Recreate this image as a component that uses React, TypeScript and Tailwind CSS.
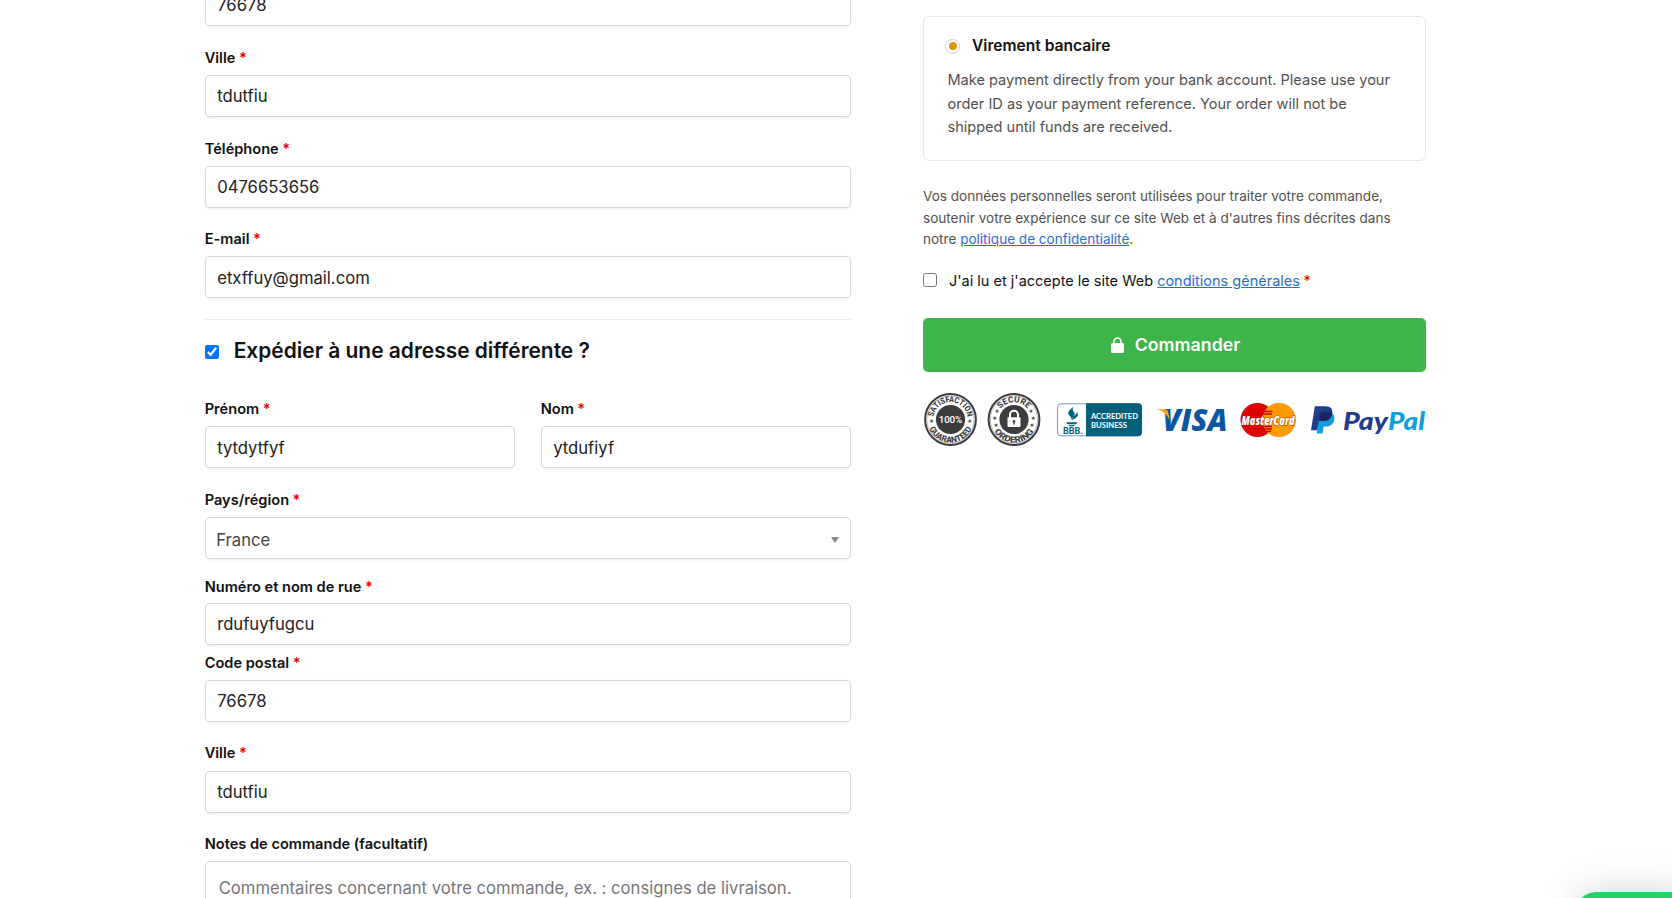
import React from "react";

const box =
  "block w-full h-[42px] shrink-0 rounded-[5px] border border-[#d3d7e0] bg-white px-[11.5px] text-[16.65px] text-[#222] shadow-[0_1px_3px_rgba(0,0,0,0.08)] outline-none placeholder:text-[#777]";

const caption = "mb-[6px] block text-[14.6px] leading-[22px] font-semibold text-[#111]";

function Star() {
  return <span className="ml-[3.5px] text-[#e2000f]">*</span>;
}

type FieldProps = { label: string; value: string; className?: string; captionClass?: string; inputClass?: string };

function Field({ label, value, className = "h-[91px]", captionClass = "", inputClass = "" }: FieldProps) {
  return (
    <label className={`flex w-full flex-col justify-end ${className}`}>
      {label && (
        <span className={`${caption} ${captionClass}`}>
          {label}
          <Star />
        </span>
      )}
      <input className={`${box} ${inputClass}`} defaultValue={value} />
    </label>
  );
}

function Seals() {
  return (
    <svg className="mt-[20px] block h-[56px] w-[504px]" viewBox="923 392 504 56">
      <defs>
        <path id="top1" d="M933.5 422a17.2 17.2 0 1 1 34 0" />
        <path id="bot1" d="M927.4 419.5a23.1 23.1 0 0 0 46.2 0" />
        <path id="top2" d="M996.8 419.5a17.2 17.2 0 0 1 34.4 0" />
        <path id="bot2" d="M990.9 419.5a23.1 23.1 0 0 0 46.2 0" />
      </defs>
      {[950.5, 1014].map((cx) => (
        <g key={cx}>
          <circle cx={cx} cy="419.5" r="25.4" fill="#fff" stroke="#3d3d40" strokeWidth="2" />
          <circle cx={cx} cy="419.5" r="23.6" fill="none" stroke="#77777a" strokeWidth="0.5" />
          <circle cx={cx} cy="419.5" r="14.6" fill="#3d3d40" />
        </g>
      ))}
      <g fill="#3d3d40" fontFamily="Roboto, sans-serif" fontWeight="800" fontSize="8.4" textAnchor="middle">
        <text><textPath href="#top1" startOffset="50%" textLength="49" lengthAdjust="spacingAndGlyphs">SATISFACTION</textPath></text>
        <text><textPath href="#bot1" startOffset="50%" textLength="54" lengthAdjust="spacingAndGlyphs">GUARANTEED</textPath></text>
        <text><textPath href="#top2" startOffset="50%" textLength="31" lengthAdjust="spacingAndGlyphs">SECURE</textPath></text>
        <text><textPath href="#bot2" startOffset="50%" textLength="47" lengthAdjust="spacingAndGlyphs">ORDERING</textPath></text>
        <text x="950.5" y="423" fontSize="9.8" fontWeight="500" fill="#fff" textLength="23.5">100%</text>
        <g fontSize="5.5" fontFamily="DejaVu Sans, sans-serif">
          <text x="931.4" y="423.4">★</text>
          <text x="969.6" y="423.4">★</text>
          <text x="997" y="413">★</text>
          <text x="994.8" y="420">★</text>
          <text x="996" y="427">★</text>
          <text x="1031" y="413">★</text>
          <text x="1033.2" y="420">★</text>
          <text x="1032" y="427">★</text>
        </g>
      </g>
      <path d="M1010 418v-3.2a4 4 0 0 1 8 0v3.2" fill="none" stroke="#fff" strokeWidth="2" />
      <rect x="1007.5" y="417.3" width="13" height="9.6" rx="1" fill="#fff" />
      <path d="M1014 420a1.4 1.4 0 0 1 .7 2.6v2h-1.4v-2a1.4 1.4 0 0 1 .7-2.6z" fill="#3d3d40" />

      <rect x="1057.5" y="403.8" width="84" height="32" rx="3.5" fill="#fff" stroke="#6b9fb0" />
      <path d="M1086 403.3h52a4 4 0 0 1 4 4v25a4 4 0 0 1-4 4h-52z" fill="#03607a" />
      <path d="M1073.5 406.5c-1.5 2-5.6 4.2-5.2 7 .3 2 3.2 2.6 2.6 5.3 2.1-1.3 4.3-3.1 3.9-5.2-.4-2.2-3.5-2.9-1.3-7.1zM1076.8 411.8c.5 2.8-4.4 5.2-5.6 8.4 3.7-1.3 6.8-3.2 6.7-5.7 0-1-.5-1.9-1.1-2.7zM1066 422.3h11.5l-1.5 2h-8.5zM1068.5 425h6.5l-1 1.3h-4.5z" fill="#03607a" />
      <text x="1063" y="433.8" fontFamily="Roboto, sans-serif" fontWeight="700" fontSize="8.5" fill="#03607a" textLength="20" lengthAdjust="spacingAndGlyphs">BBB.</text>
      <g fontFamily="Lato, sans-serif" fontWeight="700" fontSize="8.2" fill="#fff">
        <text x="1091" y="418.7" textLength="47" lengthAdjust="spacingAndGlyphs">ACCREDITED</text>
        <text x="1091" y="427.9" textLength="36" lengthAdjust="spacingAndGlyphs">BUSINESS</text>
      </g>

      <text x="1162.5" y="431.3" fontFamily="Open Sans, sans-serif" fontWeight="800" fontStyle="italic" fontSize="30.5" fill="#0b56a0" textLength="65" lengthAdjust="spacingAndGlyphs">VISA</text>
      <path d="M1157 409.3h7.5c2.5 0 3.3 1 3.7 3l1.6 8c-2.6-5.6-7-9.4-12.8-11z" fill="#f7a11a" />

      <circle cx="1257.5" cy="420" r="17" fill="#dd0005" />
      <circle cx="1279" cy="420" r="17" fill="#ff9a00" />
      <path d="M1264 411.5h8.5M1263 414h9M1263 426.5h9M1264 429h8M1266 431.5h5" stroke="#dd0005" strokeWidth="1.3" />
      <text x="1241.5" y="425" fontFamily="Open Sans, sans-serif" fontWeight="800" fontStyle="italic" fontSize="12" fill="#fff" stroke="#8f2b10" strokeWidth="0.8" paintOrder="stroke" textLength="53" lengthAdjust="spacingAndGlyphs">MasterCard</text>

      <path d="M1319.5 413h12c2.8 1.6 3.4 4 2.7 7-1.1 4.8-4.4 6.6-8.7 6.6h-1.7l-1.4 6.9h-5.6z" fill="#0c9fdf" />
      <path d="M1314.8 406.2h10.5c5.3 0 7.8 2.8 6.8 7.3-1.1 5.4-4.6 7.6-9.9 7.6h-3.2l-1.8 9.1h-6.2z" fill="#1f3d8a" />
      <path d="M1321 412.3h11.1c.2.6.2 1 0 1.6-1.2 5-4.6 7.2-9.9 7.2h-3.1z" fill="#1c2560" />
      <g fontFamily="Lato, sans-serif" fontWeight="900" fontStyle="italic" fontSize="24.5">
        <text x="1343" y="430" fill="#1f3d8a" textLength="45" lengthAdjust="spacingAndGlyphs">Pay</text>
        <text x="1388" y="430" fill="#0c9fdf" textLength="37" lengthAdjust="spacingAndGlyphs">Pal</text>
      </g>
    </svg>
  );
}

export default function App() {
  return (
    <div className="relative flex h-[898px] w-full items-start overflow-hidden bg-white pl-[204.7px] font-['Inter',sans-serif] text-[#111]">
      <main className="w-[646px] shrink-0">
        <Field label="" value="76678" className="h-[26px]" />
        <Field label="Ville" value="tdutfiu" />
        <Field label="Téléphone" value="0476653656" />
        <Field label="E-mail" value="etxffuy@gmail.com" className="h-[90px]" inputClass="pt-[2px]" />
        <hr className="mt-[21px] border-[#ececec]" />
        <label className="mt-[14px] flex h-[34px] items-center text-[20.95px] font-semibold">
          <input type="checkbox" defaultChecked className="mt-[1px] mr-[15px] size-[14px]" />
          Expédier à une adresse différente ?
        </label>
        <div className="flex gap-[26px]">
          <Field label="Prénom" value="tytdytfyf" className="h-[100px]" inputClass="pt-[2px]" />
          <Field label="Nom" value="ytdufiyf" className="h-[100px]" inputClass="pt-[2px]" />
        </div>
        <div className="flex h-[91px] flex-col justify-end">
          <span className={caption}>
            Pays/région
            <Star />
          </span>
          <div className="flex h-[42px] items-center justify-between rounded-[5px] border border-[#d3d7e0] pr-[10.5px] pl-[10.5px] text-[16.65px] text-[#444] shadow-[0_1px_3px_rgba(0,0,0,0.08)]">
            <span className="mt-[5px]">France</span>
            <span className="mt-[4px] border-x-[4.5px] border-t-[6px] border-x-transparent border-t-[#888]" />
          </div>
        </div>
        <Field label="Numéro et nom de rue" value="rdufuyfugcu" className="h-[86px]" captionClass="!mb-[5px]" />
        <Field label="Code postal" value="76678" className="h-[77px]" />
        <Field label="Ville" value="tdutfiu" captionClass="!mb-[7px]" />
        <label className="mt-[20px] block">
          <span className={caption}>Notes de commande (facultatif)</span>
          <textarea
            className="block h-[120px] w-full resize-none rounded-[5px] border border-[#d3d7e0] px-[13px] py-[14px] text-[16.65px] leading-[25px] outline-none placeholder:text-[#777]"
            placeholder="Commentaires concernant votre commande, ex. : consignes de livraison."
          />
        </label>
      </main>

      <aside className="ml-[72.3px] w-[503px] shrink-0 pt-[16px]">
        <section className="h-[145px] rounded-[6px] border border-[#e6e6e6] pt-[17px] pl-[21.5px]">
          <div className="flex h-[24px] items-center gap-[11.5px] text-[15.6px] font-semibold">
            <span className="flex size-[15px] items-center justify-center rounded-full border border-[#d0d0d0]">
              <span className="size-[8px] rounded-full bg-[#dd9410]" />
            </span>
            Virement bancaire
          </div>
          <p className="mt-[11px] ml-[2px] w-[450px] text-[14.55px] leading-[23.5px] text-[#515151]">
            Make payment directly from your bank account. Please use your order ID as your payment reference. Your order will not be shipped until funds are received.
          </p>
        </section>
        <p className="mt-[25px] w-[480px] text-[13.55px] leading-[21.6px] text-[#515151]">
          Vos données personnelles seront utilisées pour traiter votre commande, soutenir votre expérience sur ce site Web et à d'autres fins décrites dans notre{" "}
          <a className="text-[#2a6fd0] underline">politique de confidentialité</a>.
        </p>
        <label className="mt-[17px] flex h-[24px] items-center text-[14.5px]">
          <input type="checkbox" className="mr-[12px] size-[14px]" />
          <span className="mt-[2px]">
            J'ai lu et j'accepte le site Web <a className="text-[#2a6fd0] underline">conditions générales</a>
            <Star />
          </span>
        </label>
        <button className="mt-[26px] flex h-[54px] w-full items-center justify-center gap-[11px] rounded-[5px] bg-[#3db54a] pl-[2px] text-[17.8px] font-semibold text-white">
          <svg className="h-[16px] w-[13px]" viewBox="0 0 13 16">
            <path d="M3 7V4.5a3.5 3.5 0 0 1 7 0V7" fill="none" stroke="#fff" strokeWidth="1.6" />
            <rect y="6" width="13" height="10" rx="1.5" fill="#fff" />
          </svg>
          <span className="mt-[1px]">Commander</span>
        </button>
        <Seals />
      </aside>

      <div className="absolute top-[892px] right-[-20px] h-[50px] w-[116px] rounded-[20px] bg-[#25d366] shadow-[0_0_40px_rgba(0,0,0,0.17)]" />
    </div>
  );
}
